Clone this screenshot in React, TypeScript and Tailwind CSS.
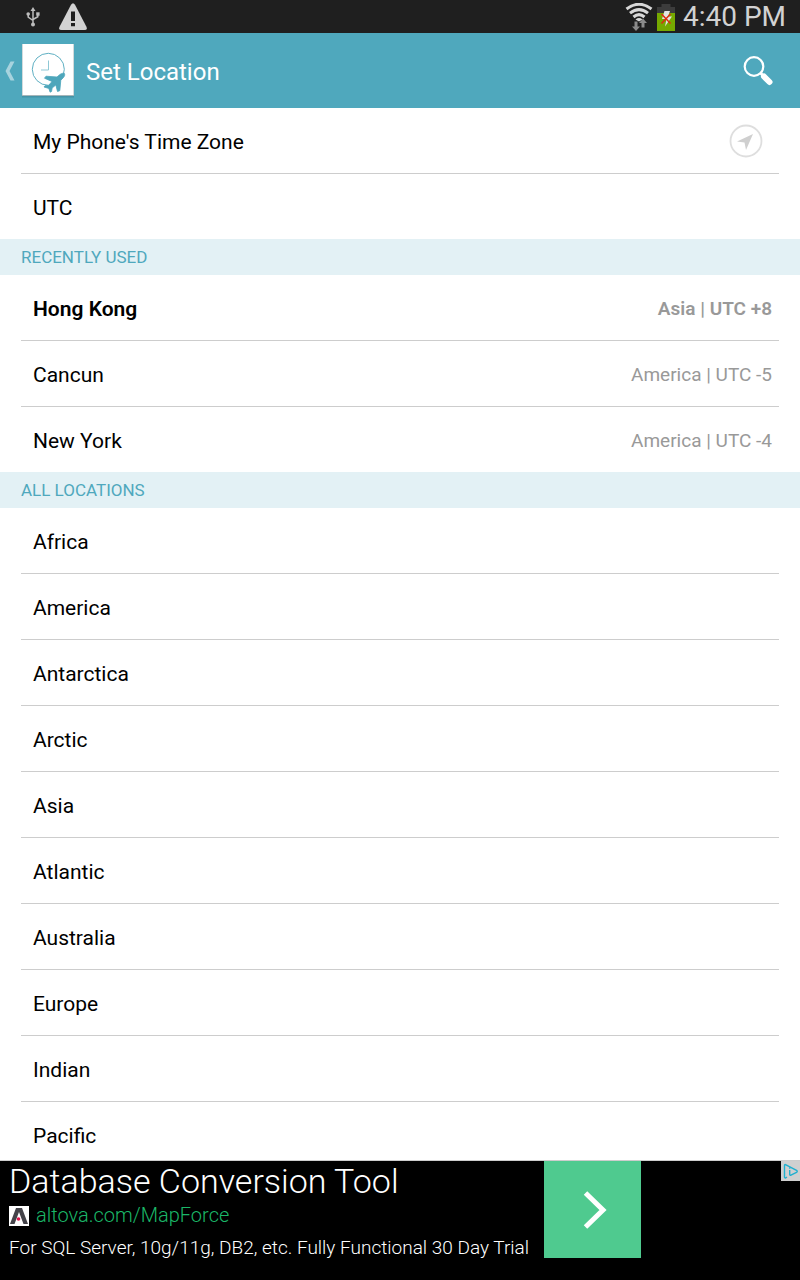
import React from "react";

type Place = { name: string; detail?: string; current?: boolean };

const recent: Place[] = [
  { name: "Hong Kong", detail: "Asia | UTC +8", current: true },
  { name: "Cancun", detail: "America | UTC -5" },
  { name: "New York", detail: "America | UTC -4" },
];

const regions: Place[] = [
  "Africa",
  "America",
  "Antarctica",
  "Arctic",
  "Asia",
  "Atlantic",
  "Australia",
  "Europe",
  "Indian",
  "Pacific",
].map((name) => ({ name }));

function UsbIcon() {
  return (
    <svg className="h-5 w-3.5" viewBox="0 0 14 20" fill="none" stroke="#bdbdbd" strokeWidth="1.5" aria-hidden="true">
      <path d="M7 3v14M2.200 7.500v2.500L7 13.500M11.800 7.500v2.200L7 12.500" />
      <path d="M7 0l2.500 4h-5z" fill="#bdbdbd" stroke="none" />
      <circle cx="7" cy="17.500" r="2" fill="#bdbdbd" stroke="none" />
      <circle cx="2.200" cy="7" r="1.800" fill="#bdbdbd" stroke="none" />
      <path d="M10.200 5.300h3.400v3.400h-3.400z" fill="#bdbdbd" stroke="none" />
    </svg>
  );
}

function WarningIcon() {
  return (
    <svg className="h-7 w-7" viewBox="0 0 28 28" aria-hidden="true">
      <path d="M12 1.800Q14-1.500 16 1.800L27.300 23.500Q29 27 25.500 27H2.500Q-1 27 .7 23.500z" fill="#d2d2d2" />
      <path d="M12 8.500h4v9.500h-4zM12 20h4v3.200h-4z" fill="#1f1f1f" />
    </svg>
  );
}

function WifiIcon() {
  return (
    <svg className="h-7 w-7" viewBox="0 0 28 28" fill="none" aria-hidden="true">
      <g stroke="#d8d8d8" strokeWidth="3">
        <path d="M1.500 6Q14-3.500 26.500 6" />
        <path d="M5 10.200Q14 3 23 10.200" />
        <path d="M8.500 14Q14 9.200 19.500 14" />
      </g>
      <path d="M10.500 16.500Q14 13.600 17.500 16.500L14 18.500z" fill="#d8d8d8" />
      <path d="M9.500 18.500H12.500v5h2.500l-4 4.500-4-4.500h2.500zM16.500 24.500v-4.500h-2.500l4-4.500 4 4.500h-2.500v4.500z" fill="#8b8b8b" />
    </svg>
  );
}

function BatteryIcon() {
  return (
    <svg className="h-7 w-[18px]" viewBox="0 0 18 28" aria-hidden="true">
      <path d="M4.500 1h9v3H18v6H0V4h4.500z" fill="#3c3c3c" />
      <path d="M0 10h18v18H0z" fill="#76a900" />
      <path d="M7.500 8h5.500l-2 5.500h4L8 23.500l1.500-7.500H5z" fill="#e4e4e4" />
      <path d="M4.500 11l9 9.500M13.500 11l-9 9.500" stroke="#dc2b12" strokeWidth="1.500" />
    </svg>
  );
}

function StatusBar() {
  return (
    <div className="flex h-[33px] shrink-0 items-center justify-between bg-[#1f1f1f] pr-3.5 pl-[26px]">
      <div className="flex items-center gap-[19px]">
        <UsbIcon />
        <WarningIcon />
      </div>
      <div className="flex items-center gap-1">
        <WifiIcon />
        <BatteryIcon />
        <span className="pt-px pl-1 text-[28px] leading-8 text-[#d2d2d2]">4:40 PM</span>
      </div>
    </div>
  );
}

function AppLogo() {
  return (
    <svg className="h-14 w-[52px]" viewBox="0 0 52 56" fill="none" aria-hidden="true">
      <path d="M0 2h52v52.500H0z" fill="#3d8698" opacity=".6" />
      <path d="M0 1h52v52H0z" fill="#a5b5b9" />
      <path d="M.5 1h51v51H.5z" fill="#fff" />
      <circle cx="26.300" cy="26.300" r="16" stroke="#5fb0c3" strokeWidth="1" />
      <path d="M26.500 17.500v9.500H19" stroke="#8fc8d5" strokeWidth="1" />
      <path
        transform="translate(0 -1)"
        d="M42.300 31.300c-1.600-.4-3.500.4-5 1.700l-2.300 2-11-.8-1.500 2 7.500 3.300-3.500 4-3.500.2-1 1.300 4.800 1.400 1.300 3.800 1.500-.8.500-3.300 3.700-3.200 1.700 6.600 2.300-.8 1-10.500 2.500-2.500c1.300-1.300 1.800-3 1-4.400z"
        fill="#4da6bb"
        stroke="#4da6bb"
        strokeWidth=".8"
      />
    </svg>
  );
}

function Header() {
  return (
    <header className="flex h-[75px] shrink-0 items-center justify-between bg-[#4fa8bd] pr-[27px] pl-[5px]">
      <div className="flex items-center gap-3">
        <button type="button" aria-label="Back" className="flex items-center gap-[7px]">
          <svg className="h-5 w-2.5" viewBox="0 0 10 20" aria-hidden="true">
            <path d="M5.500 0.500H9.500L4.500 10L9.500 19.500H5.500L.5 10z" fill="#a7d3de" />
          </svg>
          <AppLogo />
        </button>
        <h1 className="pt-0.5 text-2xl text-white">Set Location</h1>
      </div>
      <button type="button" aria-label="Search">
        <svg className="h-[30px] w-[30px]" viewBox="0 0 30 30" fill="none" stroke="#fff" aria-hidden="true">
          <circle cx="11" cy="10.500" r="9.300" strokeWidth="2.200" />
          <path d="M17.500 17l4 4" strokeWidth="3" />
          <path d="M21 20.500l5.500 5.500" strokeWidth="6" strokeLinecap="round" />
        </svg>
      </button>
    </header>
  );
}

function Row({ place, children }: { place: Place; children?: React.ReactNode }) {
  return (
    <li className="border-b border-[#cdcdcd] last:border-b-0">
      <button
        type="button"
        className={
          place.current
            ? "flex h-[65px] w-full items-center justify-between pt-1 pr-[7px] pl-3 text-left font-semibold"
            : "flex h-[65px] w-full items-center justify-between pt-1 pr-[7px] pl-3 text-left"
        }
      >
        <span className="text-[21px] text-black">{place.name}</span>
        {place.detail && <span className="text-[19px] text-[#999999]">{place.detail}</span>}
        {children}
      </button>
    </li>
  );
}

function SectionTitle({ children }: { children: React.ReactNode }) {
  return (
    <h2 className="flex h-9 items-center bg-[#e3f1f5] px-[21px] pt-px text-[17px] text-[#4fa8bd]">{children}</h2>
  );
}

function Ad() {
  return (
    <aside className="relative flex h-[120px] shrink-0 border-t border-[#cdcdcd] bg-black text-white">
      <a href="#mapforce" className="flex">
        <span className="flex w-[544px] flex-col pl-[9px]">
          <span className="text-[34px] leading-10 font-light">Database Conversion Tool</span>
          <span className="flex items-center gap-[7px] text-xl leading-[29px] font-light text-[#1bb768]">
            <svg className="h-5 w-5" viewBox="0 0 20 20" aria-hidden="true">
              <path d="M0 0h20v20H0z" fill="#fff" />
              <path d="M1 18L7 2h6l6 16h-4.500L10 6 5.500 18z" fill="#444349" />
              <circle cx="9.500" cy="13" r="1.800" fill="#e0144c" />
            </svg>
            altova.com/MapForce
          </span>
          <span className="text-[19px] leading-9 font-light whitespace-nowrap">
            For SQL Server, 10g/11g, DB2, etc. Fully Functional 30 Day Trial
          </span>
        </span>
        <span className="flex h-[97px] w-[97px] items-center justify-center bg-[#4fca8f]">
          <svg className="ml-1 h-[38px] w-6" viewBox="0 0 24 38" fill="none" aria-hidden="true">
            <path d="M2.500 2L20 19 2.500 36" stroke="#fff" strokeWidth="5" />
          </svg>
        </span>
      </a>
      <button type="button" aria-label="Ad choices" className="absolute top-0 right-0 bg-[#d0d0d0]">
        <svg className="h-5 w-[19px]" viewBox="0 0 19 20" fill="none" stroke="#1fb0cf" aria-hidden="true">
          <path d="M6 16l-1.500 1Q3.500 17 3.500 16V4.500Q3.500 3 5 3.800L15.500 9.300Q17 10.500 15.500 11.300L10 14.200Q8.700 14.500 8.700 13.500V9" strokeWidth="1.400" />
          <path d="M8.700 6.300v1.400" strokeWidth="1.500" />
        </svg>
      </button>
    </aside>
  );
}

export default function App() {
  return (
    <div className="flex h-screen flex-col bg-white font-[Roboto,sans-serif]">
      <StatusBar />
      <Header />
      <main className="min-h-0 flex-1 overflow-hidden">
        <ul className="px-[21px]">
          <Row place={{ name: "My Phone's Time Zone" }}>
            <svg className="mr-[9px] mb-1 h-[34px] w-[34px]" viewBox="0 0 34 34" fill="none" aria-hidden="true">
              <circle cx="17" cy="17" r="15.500" stroke="#dedede" strokeWidth="1.800" />
              <path d="M24 10L17 26 15.500 18.500 8 17.500z" fill="#cfcfcf" />
            </svg>
          </Row>
          <Row place={{ name: "UTC" }} />
        </ul>
        <SectionTitle>RECENTLY USED</SectionTitle>
        <ul className="px-[21px]">
          {recent.map((p) => (
            <Row key={p.name} place={p} />
          ))}
        </ul>
        <SectionTitle>ALL LOCATIONS</SectionTitle>
        <ul className="px-[21px]">
          {regions.map((p) => (
            <Row key={p.name} place={p} />
          ))}
        </ul>
      </main>
      <Ad />
    </div>
  );
}
